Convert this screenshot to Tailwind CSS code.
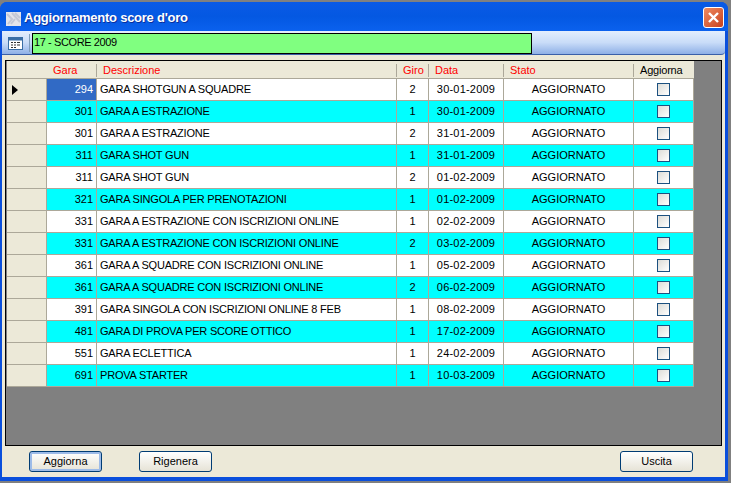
<!DOCTYPE html>
<html lang="it">
  <head>
    <meta charset="UTF-8" />
    <title>Aggiornamento score d'oro</title>
    <script src="https://cdn.jsdelivr.net/npm/@tailwindcss/browser@4"></script>
  </head>
  <body class="m-0 bg-[#808080] font-['Liberation_Sans',sans-serif] text-[11px] text-black">
    <div class="w-[731px] h-[483px] pt-[2px] overflow-hidden">
      <!-- window -->
      <div class="h-[479px] w-[728px] flex flex-col rounded-t-[7px] bg-[#0a4fdc] pl-[2px] pr-[3px] pb-[4px]">
        <!-- title bar -->
        <div class="h-[29px] -ml-[2px] -mr-[3px] rounded-t-[7px] bg-gradient-to-b from-[#0a5ae6] via-[#0458e2] to-[#0b61ee] flex items-center pl-[5px] pr-[4px] pt-[3px]">
          <svg width="17" height="17" viewBox="0 0 17 17" class="mr-[2px]">
            <path d="M1 2h15v14H1z" fill="#e4e4ea" />
            <path d="M2 4l5 5-4 5M7 3l8 9M10 3l5 5M6 14l4-5" stroke="#c4c8d6" stroke-width="2" fill="none" />
          </svg>
          <span class="text-white font-bold text-[13px] tracking-[-0.25px] [text-shadow:1px_1px_0_#0a2f9c]">Aggiornamento score d'oro</span>
          <div class="ml-auto -mt-[1px] w-[21px] h-[21px] rounded-[3px] border border-white bg-gradient-to-br from-[#ef8a60] to-[#c8401c] flex items-center justify-center">
            <svg width="13" height="13" viewBox="0 0 13 13"><path d="M2 2l9 9M11 2l-9 9" stroke="#fff" stroke-width="2.4" /></svg>
          </div>
        </div>
        <!-- client area -->
        <div class="flex-1 flex flex-col bg-[#ece9d8] min-h-0">
          <!-- toolbar -->
          <div class="h-[24px] rounded-br-[4px] bg-gradient-to-b from-[#e3eefd] via-[#c9dcf8] to-[#8fb0e6] border-b border-[#3a5fa8] flex items-start pt-[2px]">
            <div class="w-[27px] h-[20px] flex items-center justify-center">
              <svg width="15" height="13" viewBox="0 0 15 13">
                <rect x="0.5" y="0.5" width="14" height="12" fill="#fff" stroke="#3a6ea5" />
                <rect x="1" y="1" width="13" height="2.5" fill="#3a6ea5" />
                <path d="M3 5.5h2M6 5.5h2M9 5.5h3M3 8h2M6 8h2M9 8h3M3 10.5h2M6 10.5h2" stroke="#333" />
              </svg>
            </div>
            <div class="w-px h-[18px] mt-px bg-[#7f9db9] mr-[2px]"></div>
            <div class="w-[500px] h-[21px] bg-[#80ff80] border border-black pl-[1px] leading-[17px] tracking-[-0.4px]">17 - SCORE 2009</div>
          </div>
          <!-- grid -->
          <div class="mt-[5px] mx-[3px] h-[386px] border border-black bg-[#808080] overflow-hidden">
            <div id="grid" class="w-[688px] grid grid-cols-[40px_50px_300px_32px_75px_130px_60px] ml-px"></div>
          </div>
          <!-- buttons -->
          <div class="flex-1 flex items-start pt-[5px] pl-[27px] pr-[32px]">
            <button class="w-[73px] h-[21px] rounded-[3px] border border-[#003c74] bg-gradient-to-b from-white to-[#e6e3d6] shadow-[inset_0_0_0_2px_#9dbbe8]">Aggiorna</button>
            <button class="ml-[37px] w-[73px] h-[21px] rounded-[3px] border border-[#003c74] bg-gradient-to-b from-white to-[#e6e3d6]">Rigenera</button>
            <button class="ml-auto w-[73px] h-[21px] rounded-[3px] border border-[#003c74] bg-gradient-to-b from-white to-[#e6e3d6]">Uscita</button>
          </div>
        </div>
      </div>
    </div>
    <script>
      const rows = [
        ["294", "GARA SHOTGUN A SQUADRE", "2", "30-01-2009"],
        ["301", "GARA A ESTRAZIONE", "1", "30-01-2009"],
        ["301", "GARA A ESTRAZIONE", "2", "31-01-2009"],
        ["311", "GARA SHOT GUN", "1", "31-01-2009"],
        ["311", "GARA SHOT GUN", "2", "01-02-2009"],
        ["321", "GARA SINGOLA PER PRENOTAZIONI", "1", "01-02-2009"],
        ["331", "GARA A ESTRAZIONE CON ISCRIZIONI ONLINE", "1", "02-02-2009"],
        ["331", "GARA A ESTRAZIONE CON ISCRIZIONI ONLINE", "2", "03-02-2009"],
        ["361", "GARA A SQUADRE CON ISCRIZIONI ONLINE", "1", "05-02-2009"],
        ["361", "GARA A SQUADRE CON ISCRIZIONI ONLINE", "2", "06-02-2009"],
        ["391", "GARA SINGOLA CON ISCRIZIONI ONLINE 8 FEB", "1", "08-02-2009"],
        ["481", "GARA DI PROVA PER SCORE OTTICO", "1", "17-02-2009"],
        ["551", "GARA ECLETTICA", "1", "24-02-2009"],
        ["691", "PROVA STARTER", "1", "10-03-2009"],
      ];
      const head = "h-[18px] pt-[2px] bg-[#ece9d8] border-b border-[#aca899] flex items-center text-[#f00] relative";
      const sep = '<span class="absolute left-[-1px] top-[3px] h-[13px] w-px bg-[#aca899]"></span>';
      let html =
        `<div class="${head}"></div>` +
        `<div class="${head} pl-[6px]">Gara</div>` +
        `<div class="${head} pl-[6px]">${sep}Descrizione</div>` +
        `<div class="${head} pl-[6px]">${sep}Giro</div>` +
        `<div class="${head} pl-[6px]">${sep}Data</div>` +
        `<div class="${head} pl-[6px]">${sep}Stato</div>` +
        `<div class="${head} pl-[6px] tracking-[-0.2px] text-black">${sep}Aggiorna</div>`;
      rows.forEach((r, i) => {
        const bg = i % 2 ? "bg-[#00ffff]" : "bg-white";
        const cell = `h-[22px] ${bg} border-b border-r border-[#aca899] flex items-center`;
        const garaCell = i === 0
          ? "h-[22px] bg-[#316ac5] text-white border-b border-r border-[#aca899] flex items-center justify-end pr-[3px]"
          : `${cell} justify-end pr-[3px]`;
        html +=
          `<div class="h-[22px] bg-[#ece9d8] border-b border-[#aca899] border-r flex items-center pl-[5px]">` +
          (i === 0 ? '<svg width="6" height="10" viewBox="0 0 6 10"><path d="M0 0l6 5-6 5z" fill="#000"/></svg>' : "") +
          `</div>` +
          `<div class="${garaCell}">${r[0]}</div>` +
          `<div class="${cell} pl-[3px] whitespace-nowrap tracking-[-0.2px]">${r[1]}</div>` +
          `<div class="${cell} justify-center">${r[2]}</div>` +
          `<div class="${cell} justify-center tracking-[0.2px]">${r[3]}</div>` +
          `<div class="${cell} justify-center">AGGIORNATO</div>` +
          `<div class="${cell} justify-center"><span class="w-[13px] h-[13px] border border-[#1c5180] bg-gradient-to-br from-[#dcdcd7] to-white"></span></div>`;
      });
      document.getElementById("grid").innerHTML = html;
    </script>
  </body>
</html>
